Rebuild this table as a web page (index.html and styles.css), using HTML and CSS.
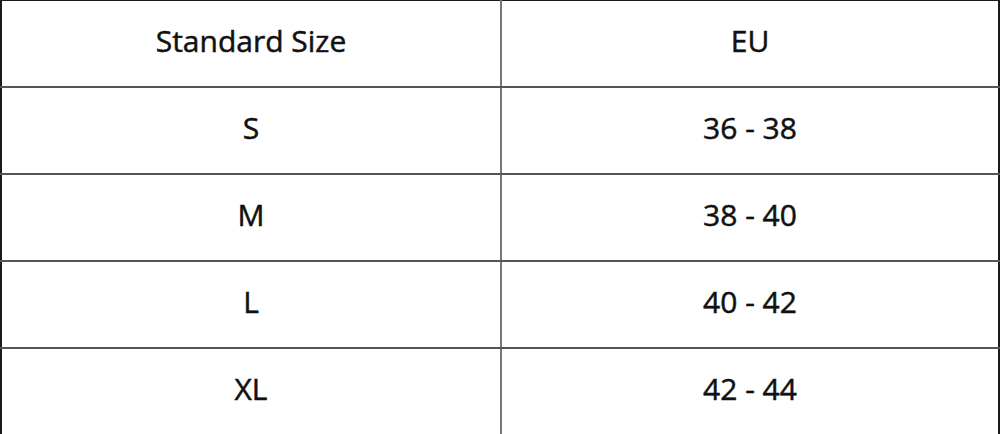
FILE: index.html
```html
<!DOCTYPE html>
<html>
<head>
<meta charset="utf-8">
<link rel="stylesheet" href="styles.css">
</head>
<body>
<table class="size-table">
  <tr class="row head"><td class="cell left">Standard Size</td><td class="cell right">EU</td></tr>
  <tr class="row"><td class="cell left">S</td><td class="cell right">36 - 38</td></tr>
  <tr class="row"><td class="cell left">M</td><td class="cell right">38 - 40</td></tr>
  <tr class="row"><td class="cell left">L</td><td class="cell right">40 - 42</td></tr>
  <tr class="row"><td class="cell left">XL</td><td class="cell right">42 - 44</td></tr>
</table>
</body>
</html>
```
FILE: styles.css
```css
html, body {
  margin: 0;
  padding: 0;
  background: #fff;
}
.size-table {
  width: 1000px;
  border-collapse: collapse;
  font-family: "Open Sans", "Lato", sans-serif;
  font-size: 30px;
  font-weight: 400;
  -webkit-text-stroke: 0.5px #111;
  color: #111;
  border-top: 1px solid #1a1a1a;
  border-left: 2px solid #1a1a1a;
  border-right: 2px solid #1a1a1a;
}
.cell {
  height: 79px;
  padding: 0 0 6px 0;
  text-align: center;
  vertical-align: middle;
  border-bottom: 2px solid #555;
}
.left {
  width: 498px;
  border-right: 2px solid #777;
}
```
